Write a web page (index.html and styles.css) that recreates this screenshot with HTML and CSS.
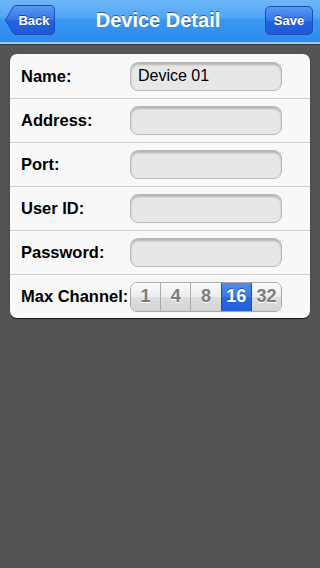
FILE: index.html
```html
<!DOCTYPE html>
<html>
<head>
<meta charset="utf-8">
<link rel="stylesheet" href="styles.css">
</head>
<body>
<header class="navbar">
  <button class="back">
    <svg class="back-shape" width="50" height="30" viewBox="0 0 50 30">
      <defs>
        <linearGradient id="bg1" x1="0" y1="0" x2="0" y2="1">
          <stop offset="0" stop-color="#5a98f2"/>
          <stop offset="0.5" stop-color="#3475e8"/>
          <stop offset="0.52" stop-color="#2462df"/>
          <stop offset="1" stop-color="#1f5ad8"/>
        </linearGradient>
      </defs>
      <path d="M11,0.5 H45 Q49.5,0.5 49.5,5 V25 Q49.5,29.5 45,29.5 H11 Q9.5,29.5 8.5,28.5 L1,16 Q0.3,15 1,14 L8.5,1.5 Q9.5,0.5 11,0.5 Z" fill="url(#bg1)" stroke="#1b4fb5" stroke-width="1"/>
    </svg>
    <span class="btn-text">Back</span>
  </button>
  <h1 class="title">Device Detail</h1>
  <button class="save"><span class="btn-text">Save</span></button>
</header>
<main class="content">
  <section class="card">
    <div class="row">
      <span class="label">Name:</span>
      <div class="field">Device 01</div>
    </div>
    <div class="row">
      <span class="label">Address:</span>
      <div class="field"></div>
    </div>
    <div class="row">
      <span class="label">Port:</span>
      <div class="field"></div>
    </div>
    <div class="row">
      <span class="label">User ID:</span>
      <div class="field"></div>
    </div>
    <div class="row">
      <span class="label">Password:</span>
      <div class="field"></div>
    </div>
    <div class="row">
      <span class="label">Max Channel:</span>
      <div class="segmented">
        <span class="seg">1</span>
        <span class="seg">4</span>
        <span class="seg">8</span>
        <span class="seg selected">16</span>
        <span class="seg">32</span>
      </div>
    </div>
  </section>
</main>
</body>
</html>
```
FILE: styles.css
```css
* { box-sizing: border-box; }
html, body {
  margin: 0;
  padding: 0;
  height: 100%;
}
body {
  background: #545454;
  font-family: "Liberation Sans", Arial, sans-serif;
}
.navbar {
  position: relative;
  height: 44px;
  display: flex;
  align-items: center;
  justify-content: space-between;
  padding: 0 7px 2px 5px;
  background: linear-gradient(to bottom, #6cb6f8 0%, #52a6f5 42%, #3b97f2 46%, #2a8bef 100%);
  border-bottom: 2px solid #9cc9f2;
  box-shadow: 0 1px 0 #3a3a3a;
}
.title {
  margin: 0;
  font-size: 20px;
  font-weight: bold;
  color: #fff;
  text-shadow: 0 -1px 0 rgba(0, 0, 0, 0.45);
  margin-left: -4px;
}
.back, .save {
  position: relative;
  border: 0;
  padding: 0;
  background: none;
  font-family: inherit;
  font-size: 13px;
  font-weight: bold;
  color: #fff;
  display: flex;
  align-items: center;
  justify-content: center;
}
.back {
  width: 50px;
  height: 30px;
  padding-left: 8px;
}
.back-shape {
  position: absolute;
  left: 0;
  top: 0;
}
.btn-text {
  position: relative;
  text-shadow: 0 -1px 0 rgba(0, 0, 0, 0.45);
}
.save {
  width: 48px;
  height: 29px;
  border-radius: 5px;
  border: 1px solid #1b4fb5;
  background: linear-gradient(to bottom, #5a98f2 0%, #3475e8 50%, #2462df 52%, #1f5ad8 100%);
}
.content {
  padding: 10px 10px;
}
.card {
  background: #f8f8f8;
  border-radius: 7px;
  box-shadow: 0 1px 1px rgba(0, 0, 0, 0.7);
  overflow: hidden;
}
.row {
  height: 44px;
  display: flex;
  align-items: center;
  border-top: 1px solid #d2d2d2;
}
.row:first-child {
  border-top: 0;
}
.label {
  width: 120px;
  padding-left: 11px;
  font-size: 16.5px;
  font-weight: bold;
  color: #000;
  white-space: nowrap;
}
.field {
  width: 152px;
  height: 29px;
  border: 1px solid #b8b8b8;
  border-radius: 8px;
  background: #e7e7e7;
  box-shadow: inset 0 2px 2px rgba(0, 0, 0, 0.22);
  font-size: 16px;
  color: #000;
  padding-left: 7px;
  display: flex;
  align-items: center;
}
.segmented {
  width: 152px;
  height: 30px;
  display: flex;
  border: 1px solid #a9a9a9;
  border-radius: 7px;
  overflow: hidden;
}
.seg {
  flex: 1;
  display: flex;
  align-items: center;
  justify-content: center;
  font-size: 18px;
  font-weight: bold;
  color: #7d7d7d;
  text-shadow: 0 1px 0 #fff;
  background: linear-gradient(to bottom, #fbfbfb 0%, #ececec 50%, #dedede 52%, #d3d3d3 100%);
  border-left: 1px solid #ababab;
}
.seg:first-child {
  border-left: 0;
}
.seg.selected {
  color: #fff;
  text-shadow: 0 -1px 0 rgba(0, 0, 0, 0.4);
  background: linear-gradient(to bottom, #4f8ced 0%, #3a7ae8 50%, #2767df 52%, #2160d9 100%);
  border-left: 1px solid #1f4fae;
  border-right: 1px solid #1f4fae;
}
.seg.selected + .seg {
  border-left: 0;
}
```
